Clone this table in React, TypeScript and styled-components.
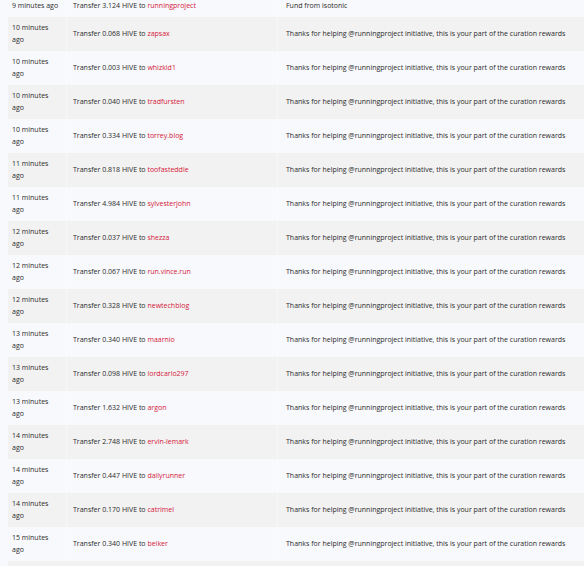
import React from 'react';
import styled, { createGlobalStyle } from 'styled-components';

interface ITransfer {
  time: string;
  amount: string;
  to: string;
  memo: string;
}

const THANKS = 'Thanks for helping @runningproject initiative, this is your part of the curation rewards';

const transfers: ITransfer[] = [
  { time: '9 minutes ago', amount: '3.124', to: 'runningproject', memo: 'Fund from isotonic' },
  { time: '10 minutes ago', amount: '0.068', to: 'zapsax', memo: THANKS },
  { time: '10 minutes ago', amount: '0.003', to: 'whizkid1', memo: THANKS },
  { time: '10 minutes ago', amount: '0.040', to: 'tradfursten', memo: THANKS },
  { time: '10 minutes ago', amount: '0.334', to: 'torrey.blog', memo: THANKS },
  { time: '11 minutes ago', amount: '0.818', to: 'toofasteddie', memo: THANKS },
  { time: '11 minutes ago', amount: '4.984', to: 'sylvesterjohn', memo: THANKS },
  { time: '12 minutes ago', amount: '0.037', to: 'shezza', memo: THANKS },
  { time: '12 minutes ago', amount: '0.067', to: 'run.vince.run', memo: THANKS },
  { time: '12 minutes ago', amount: '0.328', to: 'newtechblog', memo: THANKS },
  { time: '13 minutes ago', amount: '0.340', to: 'maarnio', memo: THANKS },
  { time: '13 minutes ago', amount: '0.098', to: 'lordcarlo297', memo: THANKS },
  { time: '13 minutes ago', amount: '1.632', to: 'argon', memo: THANKS },
  { time: '14 minutes ago', amount: '2.748', to: 'ervin-lemark', memo: THANKS },
  { time: '14 minutes ago', amount: '0.447', to: 'dailyrunner', memo: THANKS },
  { time: '14 minutes ago', amount: '0.170', to: 'catrimel', memo: THANKS },
  { time: '15 minutes ago', amount: '0.340', to: 'beiker', memo: THANKS },
];

const GlobalStyle = createGlobalStyle`
  html, body {
    margin: 0;
    padding: 0;
    background-color: #f8f9fc;
    overflow: hidden;
  }
  body {
    padding: 0 0 0 8px;
    font-family: 'Open Sans', 'Noto Sans', sans-serif;
    color: #2b2b2b;
  }
`;

const App = () => {
  return (
    <>
      <GlobalStyle />
      <Table>
        <tbody>
          {transfers.map((t, i) => (
            <Row key={i} $striped={i % 2 === 1}>
              <TimeCell>{t.time}</TimeCell>
              <TransferCell>
                Transfer {t.amount} HIVE to <Account href='#'>{t.to}</Account>
              </TransferCell>
              <MemoCell>{t.memo}</MemoCell>
            </Row>
          ))}
        </tbody>
      </Table>
      <Tail />
    </>
  );
};

export default App;

const Table = styled.table`
  width: 600px;
  margin-top: -5px;
  border-collapse: collapse;
  table-layout: fixed;
  font-size: 7px;
  line-height: 12px;
`;

const Row = styled.tr<{ $striped: boolean }>`
  background-color: ${(props) => (props.$striped ? '#f2f2f2' : '#f8f9fc')};
`;

const Cell = styled.td`
  padding: 5px 4px;
  vertical-align: middle;
  border-right: 1px solid rgba(255, 255, 255, 0.35);
`;

const TimeCell = styled(Cell)`
  width: 50px;
`;

const TransferCell = styled(Cell)`
  width: 200px;
  padding-left: 6px;
`;

const MemoCell = styled(Cell)`
  padding-left: 8px;
  white-space: nowrap;
`;

const Account = styled.a`
  color: #d4173a;
  text-decoration: none;
`;

/* start of the next striped row, cut by the bottom of the view */
const Tail = styled.div`
  width: 600px;
  height: 34px;
  background-color: #f2f2f2;
`;
